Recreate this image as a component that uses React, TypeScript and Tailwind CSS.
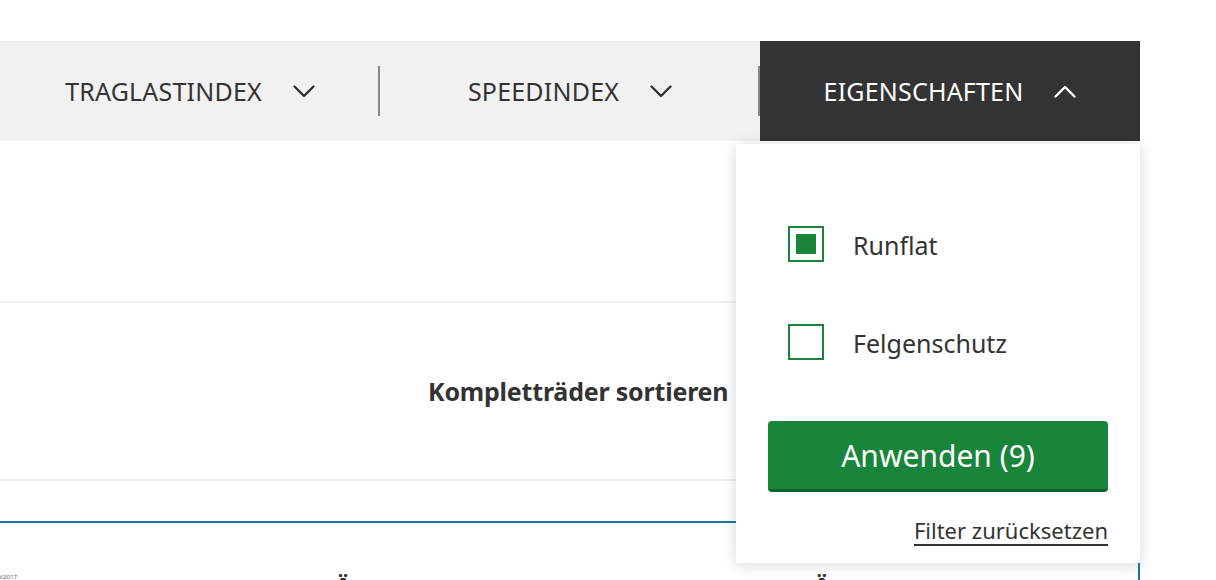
import { useState } from 'react';

const Chevron = ({ up, className }: { up?: boolean; className?: string }) => (
  <svg width="22" height="13" viewBox="0 0 22 13" fill="none" className={className}>
    <path
      d={up ? 'M1.5 11.5 L11 2 L20.5 11.5' : 'M1.5 1.5 L11 11 L20.5 1.5'}
      stroke="currentColor"
      strokeWidth="2.4"
      strokeLinecap="round"
      strokeLinejoin="round"
    />
  </svg>
);

function Checkbox({ checked, label, onToggle }: { checked: boolean; label: string; onToggle: () => void }) {
  return (
    <button type="button" onClick={onToggle} className="flex items-center gap-[29px] text-left">
      <span className="flex h-9 w-9 items-center justify-center border-2 border-[#1a843a] bg-white">
        {checked && <span className="h-5 w-5 bg-[#1a843a]" />}
      </span>
      <span className="pt-[3px] text-[25px] leading-none text-[#333]">{label}</span>
    </button>
  );
}

export default function App() {
  const [runflat, setRunflat] = useState(true);
  const [felgen, setFelgen] = useState(false);

  return (
    <div className="relative h-[580px] w-[1216px] overflow-hidden bg-white font-['Noto_Sans',sans-serif] text-[#333]">
      <div className="h-[41px]" />

      {/* filter bar */}
      <div className="flex h-[100px] w-[1140px]">
        <div className="flex w-[380px] items-center bg-[#f1f1f1]">
          <div className="flex flex-1 items-center justify-center gap-[31px] pl-[2px]">
            <span className="text-[25px] leading-none tracking-[0.2px]">TRAGLASTINDEX</span>
            <Chevron className="text-[#333]" />
          </div>
          <div className="h-[50px] w-[2px] bg-[#8a8a8a]" />
        </div>
        <div className="flex w-[380px] items-center bg-[#f1f1f1]">
          <div className="flex flex-1 items-center justify-center gap-[31px] pl-[2px]">
            <span className="text-[25px] leading-none tracking-[0.2px]">SPEEDINDEX</span>
            <Chevron className="text-[#333]" />
          </div>
          <div className="h-[50px] w-[2px] bg-[#8a8a8a]" />
        </div>
        <div className="relative flex w-[380px] items-center justify-center gap-[31px] bg-[#333]">
          <span className="text-[25px] leading-none tracking-[0.2px] text-white">EIGENSCHAFTEN</span>
          <Chevron up className="text-white" />

          <div className="absolute left-[-24px] top-[103px] z-10 w-[404px] bg-white px-8 pb-[22px] pt-[82px] shadow-[0_2px_14px_rgba(0,0,0,0.16)]">
            <div className="flex flex-col gap-[62px] pl-5">
              <Checkbox checked={runflat} label="Runflat" onToggle={() => setRunflat(!runflat)} />
              <Checkbox checked={felgen} label="Felgenschutz" onToggle={() => setFelgen(!felgen)} />
            </div>
            <button
              type="button"
              className="mt-[61px] h-[71px] w-full rounded-[4px] border-b-[3px] border-[#10622a] bg-[#18853a] text-[30px] text-white"
            >
              Anwenden (9)
            </button>
            <div className="mt-[27px] flex justify-end">
              <a className="text-[22px] leading-none text-[#333] underline decoration-2 underline-offset-[5px]">
                Filter zurücksetzen
              </a>
            </div>
          </div>
        </div>
      </div>

      {/* sort section */}
      <div className="w-[1140px]">
        <div className="h-[160px]" />
        <div className="h-[2px] bg-[#f0f0f0]" />
        <div className="flex h-[176px] items-center pl-[428px]">
          <span className="text-[25px] font-bold leading-none tracking-[-0.2px]">Kompletträder sortieren</span>
        </div>
        <div className="h-[2px] bg-[#f0f0f0]" />
        <div className="h-[40px]" />
        <div className="h-[80px] border-r-2 border-t-2 border-[#1d75a6]">
          <div className="flex items-start pt-[51px]">
            <span className="-ml-[6px] text-[6px] leading-none text-[#555]">10/2017</span>
            <span className="ml-[318px] text-[24px] font-bold leading-none">Ä</span>
            <span className="ml-[462px] text-[24px] font-bold leading-none">Ä</span>
          </div>
        </div>
      </div>
    </div>
  );
}
